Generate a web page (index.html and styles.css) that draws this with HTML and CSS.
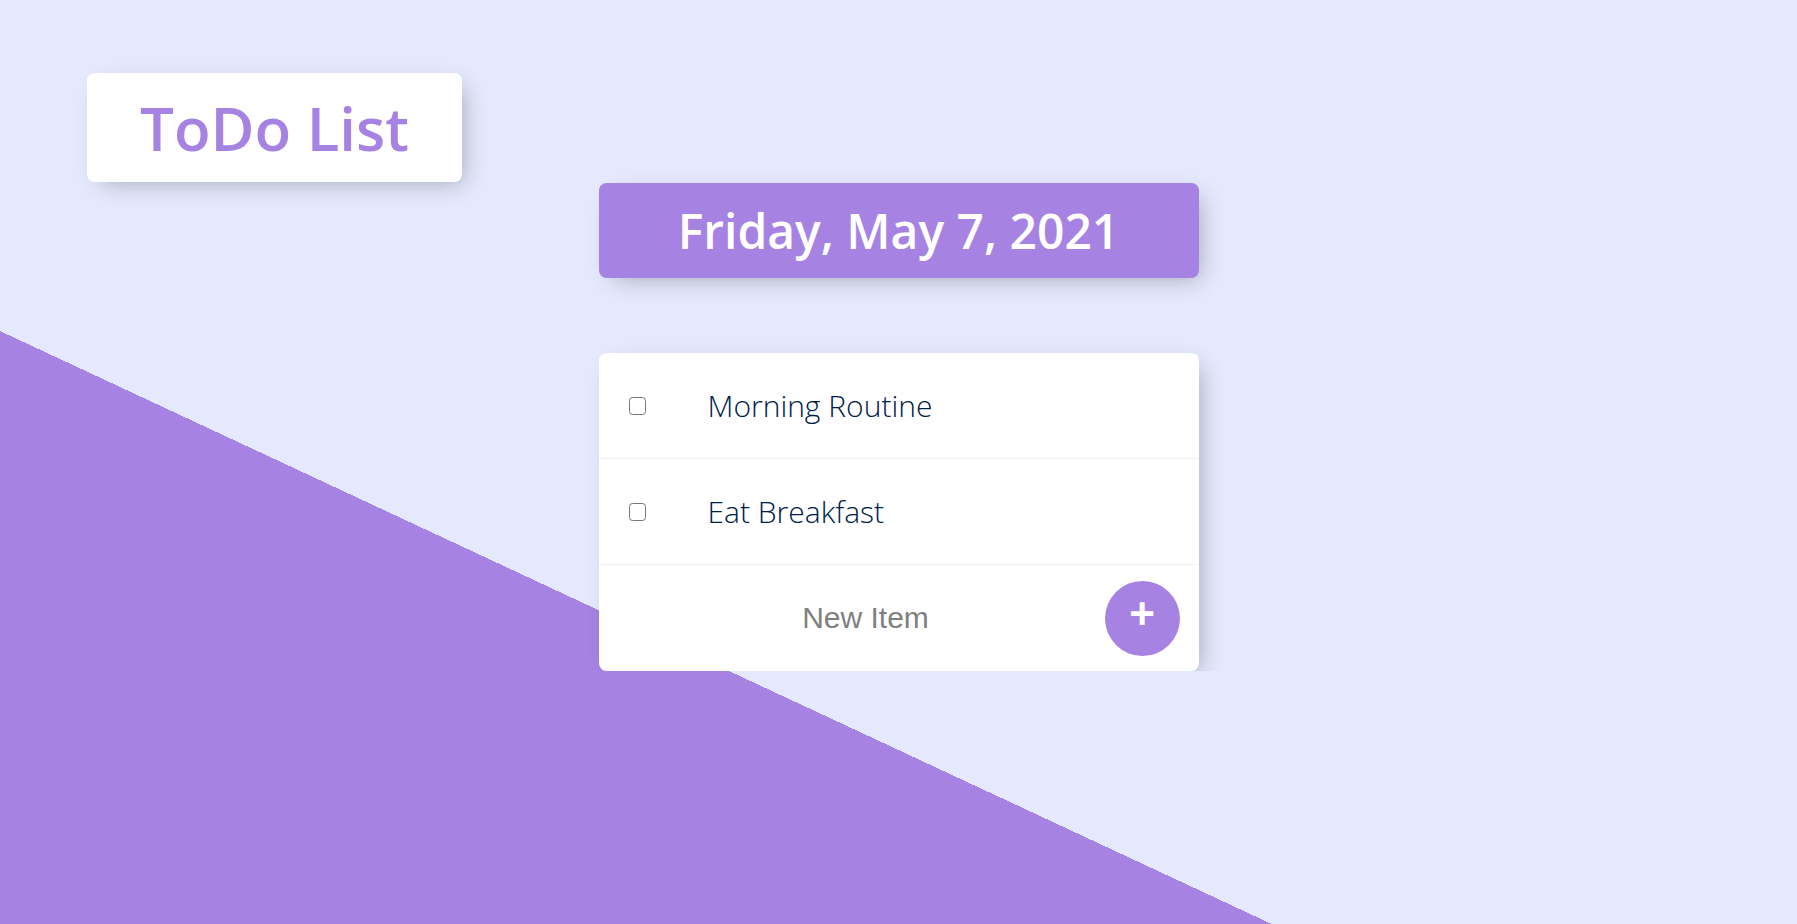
FILE: index.html
```html
<!DOCTYPE html>
<html lang="en">
<head>
<meta charset="utf-8">
<title>ToDo List</title>
<link rel="stylesheet" href="styles.css">
</head>
<body>
  <header class="brand">
    <div class="brand-box">ToDo List</div>
  </header>
  <main class="lists">
    <div class="box heading">
      <h1>Friday, May 7, 2021</h1>
    </div>
    <div class="box card">
      <div class="item">
        <input class="check" type="checkbox">
        <p class="item-text">Morning Routine</p>
      </div>
      <div class="item">
        <input class="check" type="checkbox">
        <p class="item-text">Eat Breakfast</p>
      </div>
      <form class="item new-item">
        <input class="new-input" type="text" placeholder="New Item" autocomplete="off">
        <button class="add-btn" type="button">+</button>
      </form>
    </div>
  </main>
</body>
</html>
```

FILE: styles.css
```css
html {
  height: 100%;
  overflow: hidden;
  background-color: #E4E9FD;
  background-image: linear-gradient(25deg, #A683E3 50%, #E4E9FD 50%);
  background-size: 100% 1500px;
  background-repeat: no-repeat;
}

body {
  margin: 0;
  font-family: "Open Sans", "Liberation Sans", sans-serif;
}

.brand {
  padding: 73px 0 0 87px;
}

.brand-box {
  width: 375px;
  padding: 13.7px 0 13.6px;
  background: #fff;
  border-radius: 7.5px;
  box-shadow: 7.5px 7.5px 22.5px -7.5px rgba(0, 0, 0, 0.3);
  color: #A683E3;
  font-family: "Open Sans", sans-serif;
  font-weight: 600;
  font-size: 60px;
  line-height: normal;
  text-align: center;
}

.lists {
  width: 600px;
  margin: 1px auto 0;
}

.box {
  background: #fff;
  border-radius: 7.5px;
  box-shadow: 7.5px 7.5px 22.5px -7.5px rgba(0, 0, 0, 0.3);
}

.heading {
  background: #A683E3;
  text-align: center;
}

.heading h1 {
  margin: 0;
  padding: 15px;
  color: #fff;
  font-family: "Open Sans", sans-serif;
  font-weight: 600;
  font-size: 48px;
  line-height: normal;
}

.card {
  margin-top: 75px;
}

.item {
  min-height: 105px;
  display: flex;
  align-items: center;
  border-bottom: 1px solid #F1F1F1;
}

.item:last-child {
  min-height: 106px;
  border-bottom: 0;
}

.check {
  -webkit-appearance: none;
  appearance: none;
  box-sizing: border-box;
  width: 17px;
  height: 18px;
  margin: 0 0 0 30px;
  border: 1.5px solid #767676;
  border-radius: 3.5px;
  background: #fff;
  flex: none;
}

.item-text {
  margin: 0 0 0 62px;
  font-family: "Open Sans", sans-serif;
  font-weight: 300;
  font-size: 30px;
  line-height: normal;
  color: #00204a;
}

.new-item {
  margin: 0;
  padding: 0 19px 0 36px;
}

.new-input {
  width: 462px;
  height: 90px;
  padding: 0;
  border: none;
  background: transparent;
  text-align: center;
  font-family: "Liberation Sans", Arial, sans-serif;
  font-size: 30px;
  color: #808080;
}

.new-input::placeholder {
  color: #808080;
  opacity: 1;
}

.add-btn {
  width: 75px;
  height: 75px;
  margin-left: 8px;
  padding: 0 0 9px;
  border: 0;
  border-radius: 50%;
  background: #A683E3;
  color: #fff;
  font-family: "Liberation Sans", Arial, sans-serif;
  font-size: 44px;
  font-weight: 700;
  line-height: 1;
  flex: none;
}
```
